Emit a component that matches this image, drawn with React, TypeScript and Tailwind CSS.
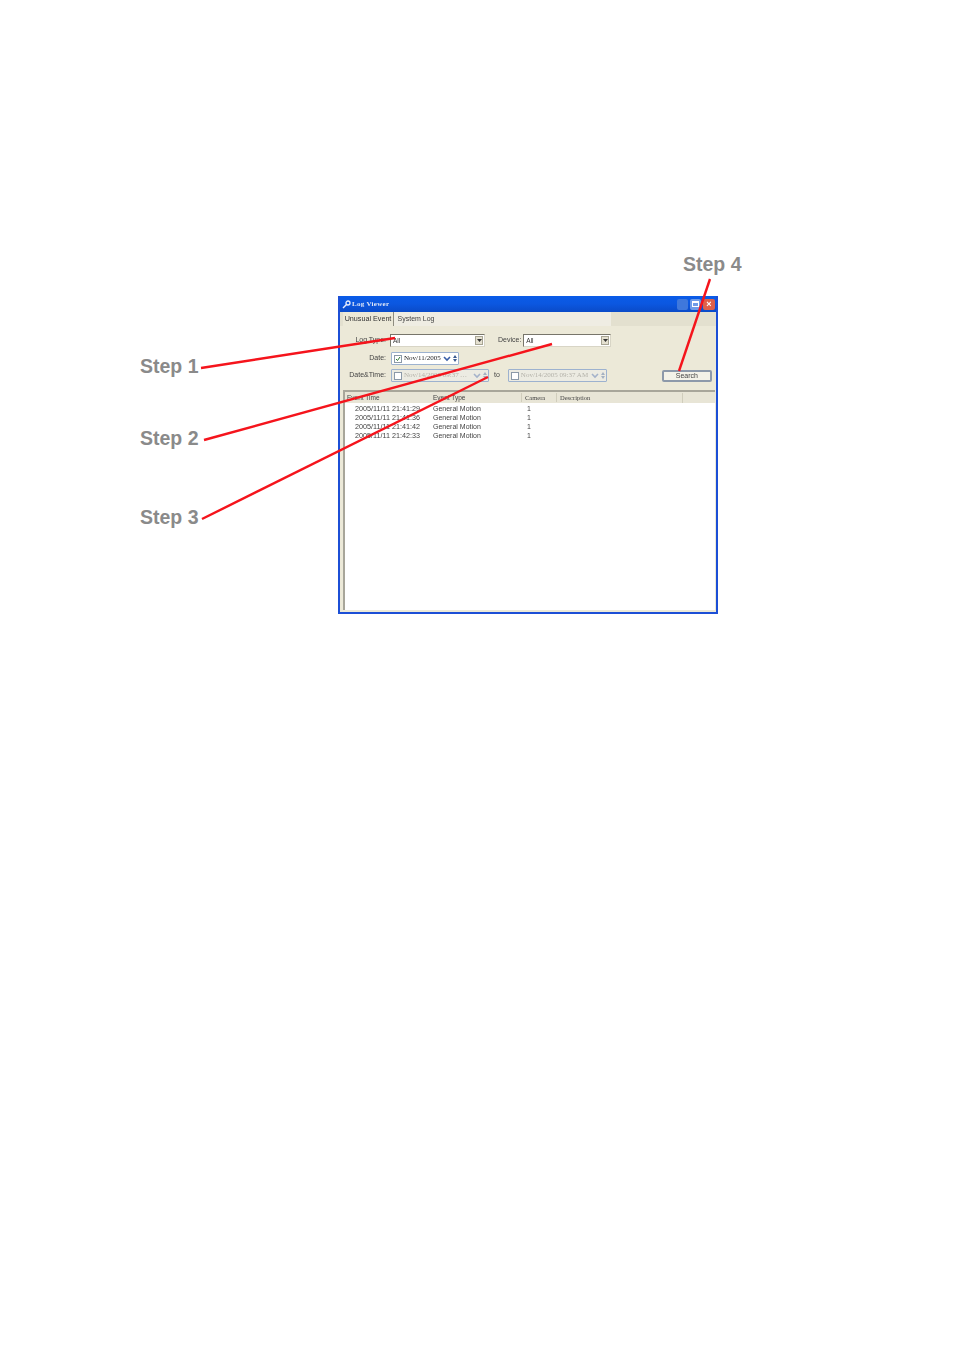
const rows = [
  ['2005/11/11 21:41:29', 'General Motion', '1'],
  ['2005/11/11 21:41:36', 'General Motion', '1'],
  ['2005/11/11 21:41:42', 'General Motion', '1'],
  ['2005/11/11 21:42:33', 'General Motion', '1'],
];

const steps = [
  { label: 'Step 1', pos: 'left-[140px] top-[355px]' },
  { label: 'Step 2', pos: 'left-[140px] top-[427px]' },
  { label: 'Step 3', pos: 'left-[140px] top-[506px]' },
  { label: 'Step 4', pos: 'left-[683px] top-[253px]' },
];

const Arrow = () => (
  <span className="ml-auto mr-[1px] flex h-[9px] w-[8px] items-center justify-center border border-[#a8a594] bg-[#e4e0d0]">
    <svg width="5" height="3" viewBox="0 0 5 3">
      <path d="M0 0h5L2.5 3z" fill="#333" />
    </svg>
  </span>
);

const Spin = ({ faded }: { faded?: boolean }) => (
  <span className={`flex flex-col gap-[1px] ${faded ? 'opacity-40' : ''}`}>
    <svg width="4" height="3" viewBox="0 0 4 3">
      <path d="M2 0l2 3H0z" fill="#3a5a90" />
    </svg>
    <svg width="4" height="3" viewBox="0 0 4 3">
      <path d="M2 3l2-3H0z" fill="#3a5a90" />
    </svg>
  </span>
);

const Chevron = ({ faded }: { faded?: boolean }) => (
  <svg width="8" height="6" viewBox="0 0 8 6" className={faded ? 'opacity-40' : ''}>
    <path d="M1 1l3 3 3-3" fill="none" stroke="#3a5fa8" strokeWidth="1.6" />
  </svg>
);

const DatePicker = ({ text, width, on }: { text: string; width: string; on?: boolean }) => (
  <div className={`flex h-[13px] items-center gap-[2px] rounded-[1px] border border-[#9db2cf] pl-[2px] pr-[1px] ${width} ${on ? 'bg-white' : 'bg-[#ecebe2]'}`}>
    <span className="flex h-[8px] w-[8px] shrink-0 items-center justify-center border border-[#8b99a8] bg-white">
      {on && (
        <svg width="6" height="6" viewBox="0 0 6 6">
          <path d="M1 3l1.5 1.5L5 1" fill="none" stroke="#2c7a30" strokeWidth="1" />
        </svg>
      )}
    </span>
    <span className={`flex-1 truncate font-['Liberation_Serif',serif] text-[7px] ${on ? 'text-[#222]' : 'text-[#b4b2aa]'}`}>{text}</span>
    <Chevron faded={!on} />
    <Spin faded={!on} />
  </div>
);

const Select = ({ width }: { width: string }) => (
  <div className={`flex h-[13px] items-center border border-t-[#77756a] border-l-[#77756a] border-r-[#d8d5c6] border-b-[#d8d5c6] bg-white pl-[2px] text-[6.5px] text-[#333] ${width}`}>
    All
    <Arrow />
  </div>
);

export default function App() {
  return (
    <div className="relative h-[1356px] w-[954px] overflow-hidden bg-white pl-[338px] pt-[296px] font-['Liberation_Sans',sans-serif]">
      <div className="flex h-[318px] w-[380px] flex-col border-2 border-t-0 border-[#1c4fd6] bg-[#ece9d8] blur-[0.5px]">
        <div className="flex h-[16px] shrink-0 items-center bg-gradient-to-b from-[#0a5be8] via-[#0b57e0] to-[#0a4bc8] pl-[2px] pr-[1px]">
          <svg width="9" height="9" viewBox="0 0 9 9">
            <circle cx="6" cy="3" r="2" fill="none" stroke="#e8eefc" strokeWidth="1.3" />
            <path d="M4.5 4.5L1 8" stroke="#e8eefc" strokeWidth="1.5" />
          </svg>
          <span className="ml-[1px] mt-[1px] font-['Liberation_Serif',serif] text-[7px] font-bold tracking-[0.3px] text-[#dfe6f6]">Log Viewer</span>
          <div className="ml-auto flex items-center gap-[2px]">
            <span className="h-[11px] w-[11px] rounded-[2px] bg-[#3f78dc]" />
            <span className="flex h-[11px] w-[11px] items-center justify-center rounded-[2px] bg-[#6f9ce8]">
              <span className="h-[6px] w-[7px] border border-t-2 border-white" />
            </span>
            <span className="flex h-[11px] w-[12px] items-center justify-center rounded-[2px] bg-[#e0604a] text-[9px] font-bold leading-none text-white">×</span>
          </div>
        </div>

        <div className="flex h-[14px] shrink-0 items-end bg-[#e3e0cf] pl-[3px]">
          <div className="flex w-[268px] items-end self-stretch bg-[#efede3]">
            <div className="flex h-[14px] w-[51px] items-center justify-center border-r border-[#8f8d80] bg-[#ece9d8] text-[7.2px] text-[#333]">Unusual Event</div>
            <div className="ml-[1px] flex h-[13px] w-[42px] items-center justify-center text-[7px] text-[#444]">System Log</div>
          </div>
        </div>

        <div className="flex flex-col pl-[2px] pr-[1px]">
          <div className="mt-[8px] flex h-[13px] items-center">
            <span className="w-[44px] text-right text-[7px] text-[#444]">Log Type:</span>
            <div className="ml-[4px]">
              <Select width="w-[95px]" />
            </div>
            <span className="ml-[13px] text-[7px] text-[#444]">Device:</span>
            <div className="ml-[2px]">
              <Select width="w-[88px]" />
            </div>
          </div>
          <div className="mt-[5px] flex h-[13px] items-center">
            <span className="w-[44px] text-right text-[7px] text-[#444]">Date:</span>
            <div className="ml-[5px]">
              <DatePicker text="Nov/11/2005" width="w-[68px]" on />
            </div>
          </div>
          <div className="mt-[4px] flex h-[13px] items-center">
            <span className="w-[44px] text-right text-[7px] text-[#444] whitespace-nowrap">Date&amp;Time:</span>
            <div className="ml-[5px]">
              <DatePicker text="Nov/14/2005 09:37 AM" width="w-[98px]" />
            </div>
            <span className="ml-[5px] text-[7px] text-[#444]">to</span>
            <div className="ml-[8px]">
              <DatePicker text="Nov/14/2005 09:37 AM" width="w-[99px]" />
            </div>
            <div className="ml-[55px] mt-[1px] flex h-[12px] w-[50px] items-center justify-center rounded-[2px] border-2 border-[#8d99aa] bg-[#f4f2e8] text-[7px] text-[#444]">Search</div>
          </div>
        </div>

        <div className="ml-[3px] mr-[1px] mt-[8px] flex flex-1 flex-col border-l-2 border-t-2 border-l-[#a8a69a] border-t-[#a8a69a] bg-white">
          <div className="flex h-[11px] shrink-0 items-start bg-[#e8e5d6] pt-[0.5px] text-[6.5px] leading-[9px] text-[#444]">
            <span className="w-[88px] pl-[2px]">Event Time</span>
            <span className="w-[88px]">Event Type</span>
            <span className="w-[35px] border-l border-[#d0cdbc] pl-[3px] font-['Liberation_Serif',serif]">Camera</span>
            <span className="w-[126px] border-l border-[#d0cdbc] pl-[3px] font-['Liberation_Serif',serif]">Description</span>
            <span className="h-full flex-1 border-l border-[#d0cdbc]" />
          </div>
          <div className="flex flex-col pt-[2px]">
            {rows.map((r) => (
              <div key={r[0]} className="flex h-[9px] items-center text-[#444]">
                <span className="w-[88px] pl-[10px] text-[7.2px]">{r[0]}</span>
                <span className="w-[94px] text-[7px]">{r[1]}</span>
                <span className="text-[7px]">{r[2]}</span>
              </div>
            ))}
          </div>
        </div>
        <div className="h-[2px] shrink-0 bg-[#ece9d8]" />
      </div>

      {steps.map((s) => (
        <span key={s.label} className={`absolute text-[19.5px] font-bold leading-[22px] text-[#8a8a8a] ${s.pos}`}>
          {s.label}
        </span>
      ))}

      <svg className="absolute left-0 top-0" width="954" height="1356" viewBox="0 0 954 1356" fill="none">
        <g stroke="#f5141c" strokeWidth="2.4">
          <path d="M201 368L395 338" />
          <path d="M204 440L552 344" />
          <path d="M202 519L488 377" />
          <path d="M710 279L679 371" />
        </g>
      </svg>
    </div>
  );
}
